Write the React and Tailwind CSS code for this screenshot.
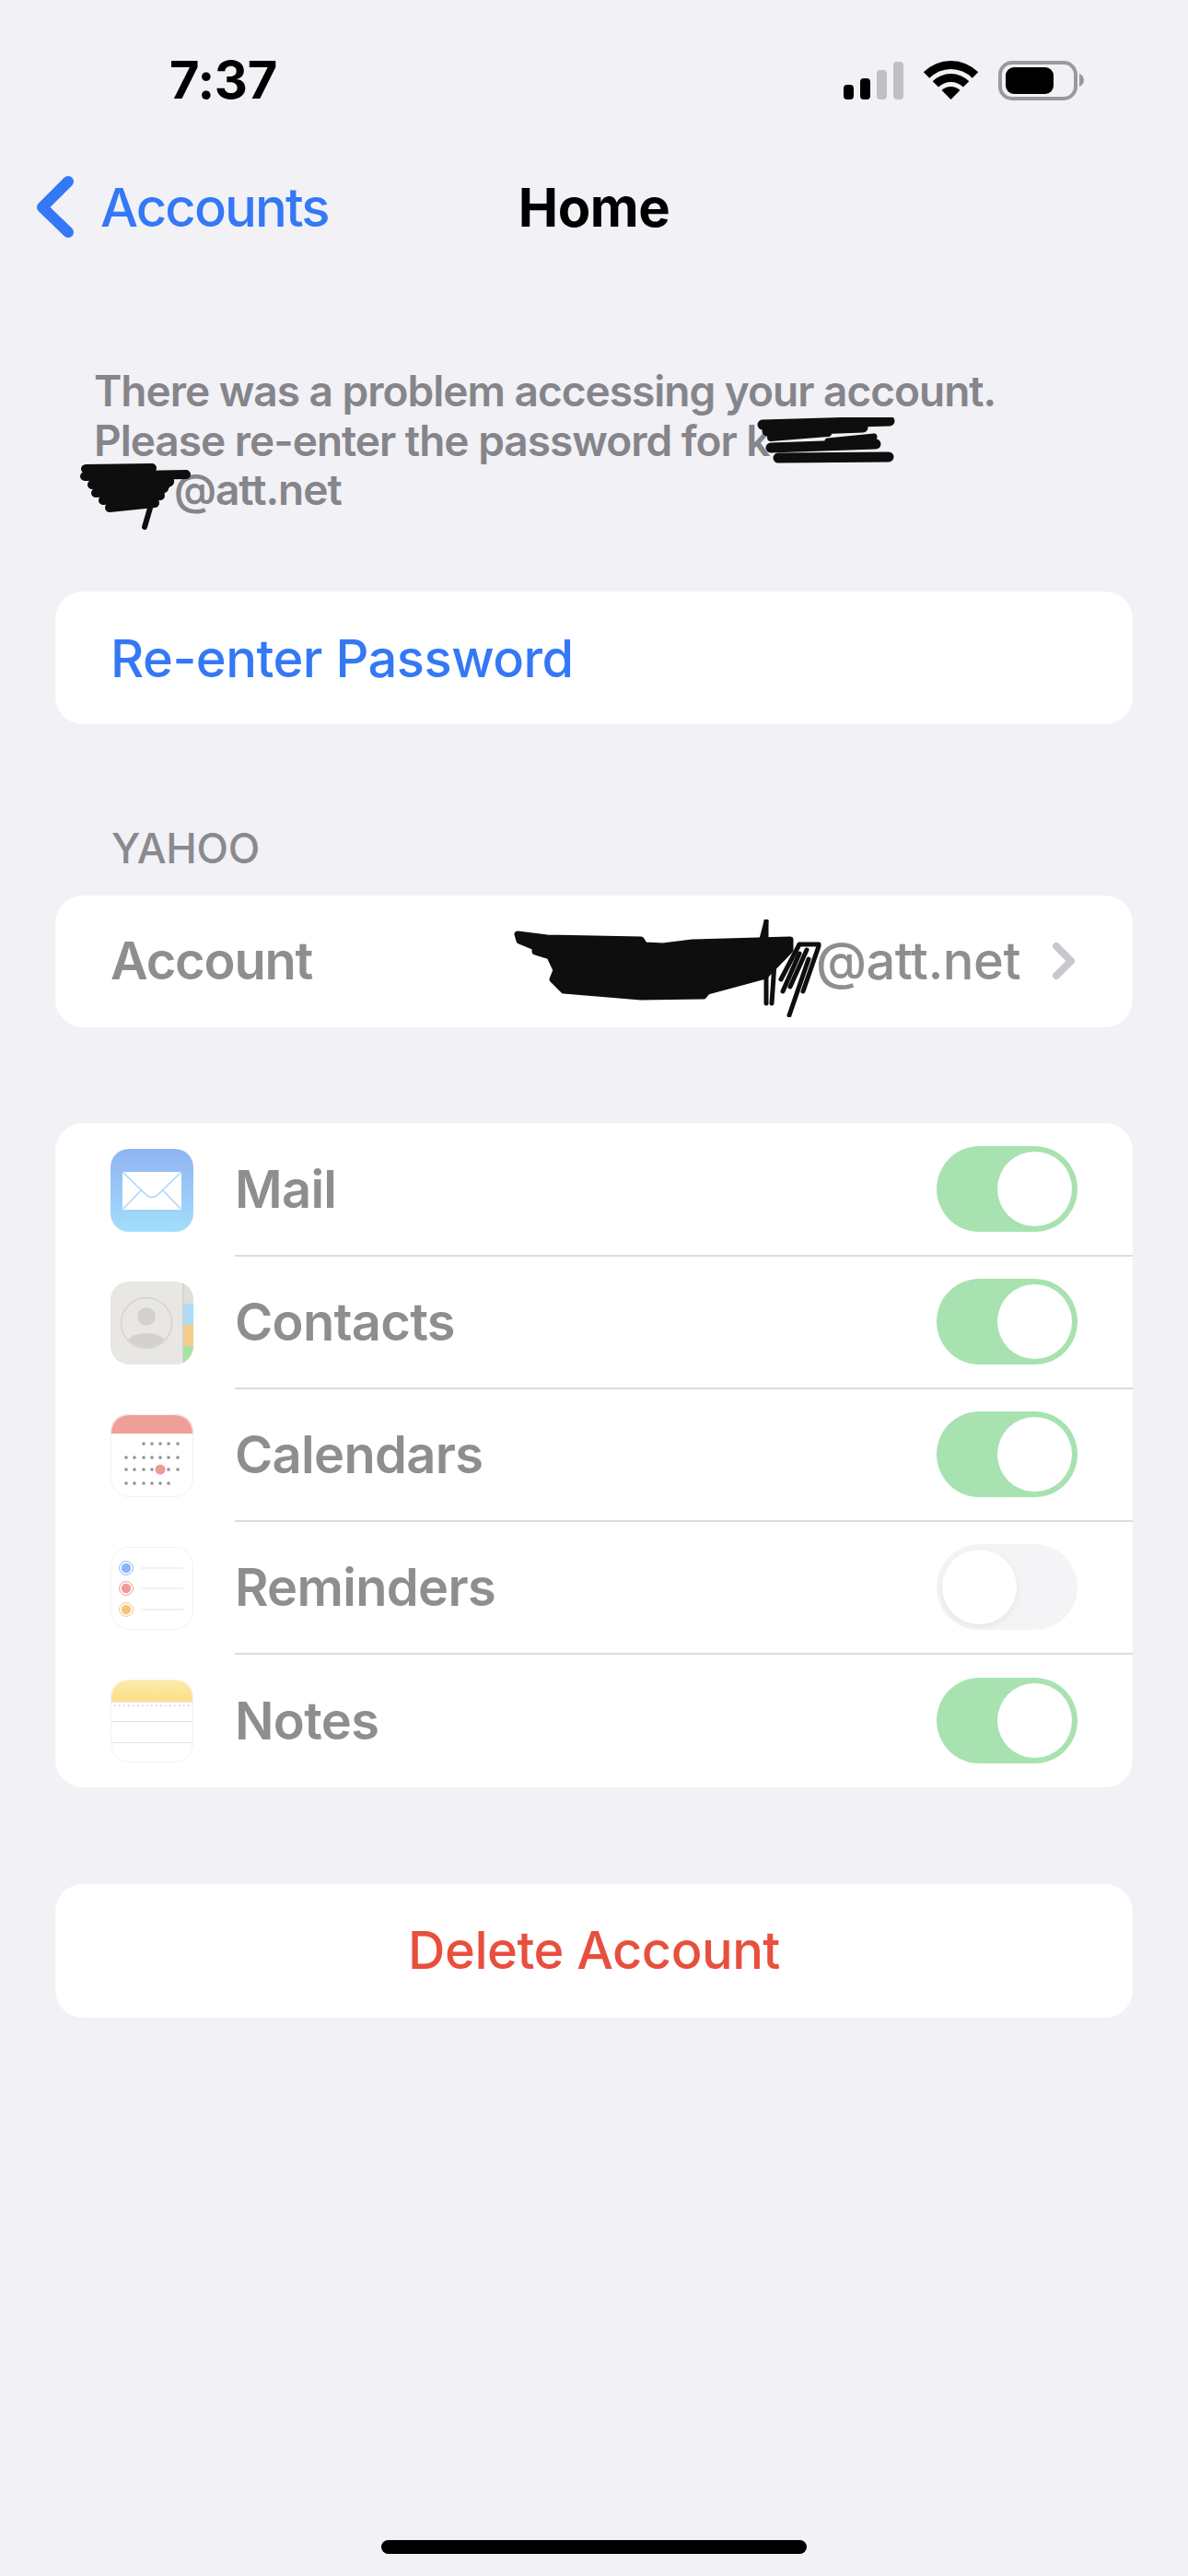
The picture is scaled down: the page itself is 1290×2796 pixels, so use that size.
const FONT = "font-['Inter','Noto_Sans',sans-serif]";

function StatusIcons() {
  return (
    <svg width="262" height="43" viewBox="916 65 262 43" fill="none">
      <rect x="916" y="91" width="11" height="16" rx="4" fill="#000" />
      <rect x="934" y="84" width="11" height="23" rx="4" fill="#000" />
      <rect x="952" y="75" width="11" height="32" rx="4" fill="#bfbfc4" />
      <rect x="970" y="66" width="11" height="41" rx="4" fill="#bfbfc4" />
      <path d="M1002.8 77.3A42 42 0 0 1 1062.2 77.3L1055.8 83.7A33 33 0 0 0 1009.2 83.7Z" fill="#000" />
      <path d="M1012.7 87.2A28 28 0 0 1 1052.3 87.2L1045.9 93.6A19 19 0 0 0 1019.1 93.6Z" fill="#000" />
      <path d="M1022.6 97.1A14 14 0 0 1 1042.4 97.1L1032.5 107Z" fill="#000" />
      <rect x="1086" y="67" width="82" height="39" rx="13" stroke="#9a9a9e" strokeWidth="4" />
      <rect x="1092" y="72" width="52" height="29" rx="9" fill="#000" />
      <path d="M1172 79C1175 80 1177 83 1177 86C1177 89 1175 92 1172 93Z" fill="#9a9a9e" />
    </svg>
  );
}

function BackChevron() {
  return (
    <svg width="42" height="68" viewBox="40 191 42 68" fill="none">
      <path d="M74 197L46 225L74 252" stroke="#3478f6" strokeWidth="12" strokeLinecap="round" strokeLinejoin="round" />
    </svg>
  );
}

function RedactionLine() {
  return (
    <svg className="absolute left-[720px] top-[55px]" width="150" height="51" viewBox="823 457 150 51" fill="none">
      <g stroke="#0e0e0e" strokeLinecap="round">
        <path d="M829 465L967 461" strokeWidth="11" />
        <path d="M834 472L938 468" strokeWidth="11" />
        <path d="M838 479L900 474" strokeWidth="8" />
        <path d="M838 490L952 486" strokeWidth="11" />
        <path d="M846 501L966 500" strokeWidth="11" />
        <path d="M900 483L950 478" strokeWidth="7" />
      </g>
    </svg>
  );
}

function RedactionName() {
  return (
    <svg className="absolute left-[-16px] top-[105px]" width="122" height="72" viewBox="86 507 122 72" fill="none">
      <g stroke="#0e0e0e" strokeWidth="10" strokeLinecap="round">
        <path d="M93 513L165 512" />
        <path d="M92 521L202 519" />
        <path d="M100 530L184 527" />
        <path d="M104 539L178 534" />
        <path d="M112 547L174 542" />
        <path d="M119 555L168 550" />
      </g>
      <path d="M186 526L164 552L157 576" stroke="#0e0e0e" strokeWidth="6" strokeLinecap="round" strokeLinejoin="round" />
    </svg>
  );
}

function RedactionAccount() {
  return (
    <svg className="absolute left-[498px] top-[26px]" width="336" height="106" viewBox="558 997 336 106" fill="none">
      <path
        d="M562 1013L594 1017L696 1019L700 1025L720 1026L752 1022L858 1019L858 1030L831 1058L768 1075L764 1080L696 1081L612 1074L600 1062L604 1052L597 1037L581 1032L581 1027L564 1020Z"
        fill="#0e0e0e"
        stroke="#0e0e0e"
        strokeWidth="7"
        strokeLinejoin="round"
      />
      <g stroke="#0e0e0e" strokeLinecap="round" strokeLinejoin="round" strokeWidth="5">
        <path d="M832 999L824 1030" />
        <path d="M832 999L832 1088" />
        <path d="M842 1030L838 1088" />
        <path d="M889 1024L868 1024L848 1062" />
        <path d="M889 1026L872 1075" />
        <path d="M878 1040L857 1101" />
        <path d="M868 1034L850 1075" />
        <path d="M876 1030L858 1070" />
      </g>
    </svg>
  );
}

function MailIcon() {
  return (
    <svg width="90" height="90" viewBox="0 0 90 90">
      <defs>
        <linearGradient id="mailBg" x1="0" y1="0" x2="0" y2="1">
          <stop offset="0" stopColor="#8fb4f1" />
          <stop offset="1" stopColor="#a2defb" />
        </linearGradient>
      </defs>
      <rect width="90" height="90" rx="20" fill="url(#mailBg)" />
      <rect x="13" y="25" width="64" height="41" rx="1.5" fill="#fff" />
      <path d="M14 26L39 50Q45 55 51 50L76 26M14 65L33 45M76 65L57 45" stroke="#a9d3f6" strokeWidth="1.4" fill="none" />
    </svg>
  );
}

function ContactsIcon() {
  return (
    <svg width="90" height="90" viewBox="0 0 90 90">
      <defs>
        <clipPath id="contactsClip"><rect width="90" height="90" rx="20" /></clipPath>
        <clipPath id="contactsRing"><circle cx="39" cy="45" r="26.5" /></clipPath>
      </defs>
      <g clipPath="url(#contactsClip)">
        <rect width="90" height="90" fill="#e8e7e3" />
        <rect x="79" width="11" height="24" fill="#dfdedb" />
        <rect x="79" y="24" width="11" height="23" fill="#aedbf7" />
        <rect x="79" y="47" width="11" height="23" fill="#f5cd8b" />
        <rect x="79" y="70" width="11" height="20" fill="#a8e2a6" />
        <rect x="78" width="1.5" height="90" fill="#d3d2cd" />
      </g>
      <circle cx="39" cy="45" r="27.5" fill="none" stroke="#d5d3ce" strokeWidth="1.4" />
      <circle cx="39" cy="38" r="9.8" fill="#d3d1cc" />
      <ellipse cx="39" cy="70" rx="23" ry="14" fill="#d3d1cc" clipPath="url(#contactsRing)" />
    </svg>
  );
}

function CalendarIcon() {
  const rows = [
    [32, [36, 45, 54, 63, 73]],
    [47, [17, 26, 36, 45, 54, 63, 73]],
    [60, [17, 26, 36, 45, 63, 73]],
    [75, [17, 26, 36, 45, 54, 63]],
  ];
  return (
    <svg width="90" height="90" viewBox="0 0 90 90">
      <defs>
        <clipPath id="calClip"><rect width="90" height="90" rx="20" /></clipPath>
      </defs>
      <g clipPath="url(#calClip)">
        <rect width="90" height="90" fill="#fff" />
        <rect width="90" height="21" fill="#ef9f98" />
      </g>
      <rect x="0.5" y="0.5" width="89" height="89" rx="20" fill="none" stroke="#f1f1f1" />
      {rows.map(([y, xs]) =>
        xs.map((x) => <rect key={`${x}-${y}`} x={x - 1.5} y={y - 1.5} width="3" height="3" fill="#8c8c8c" />)
      )}
      <circle cx="54" cy="60" r="5.5" fill="#ee9c94" />
    </svg>
  );
}

function RemindersIcon() {
  const items = [
    [23, "#8bb6f7"],
    [45, "#f09b98"],
    [68, "#f4c67c"],
  ];
  return (
    <svg width="90" height="90" viewBox="0 0 90 90">
      <rect x="0.5" y="0.5" width="89" height="89" rx="20" fill="#fff" stroke="#f2f2f2" />
      {items.map(([y, c]) => (
        <g key={y}>
          <circle cx="17" cy={y} r="7.4" fill="none" stroke={c} strokeWidth="1" />
          <circle cx="17" cy={y} r="5.2" fill={c} />
          <rect x="33" y={y - 0.5} width="46" height="1" fill="#e4e4e4" />
        </g>
      ))}
    </svg>
  );
}

function NotesIcon() {
  const dots = Array.from({ length: 18 }, (_, i) => 4 + i * 5);
  return (
    <svg width="90" height="90" viewBox="0 0 90 90">
      <defs>
        <clipPath id="notesClip"><rect width="90" height="90" rx="20" /></clipPath>
        <linearGradient id="notesBg" x1="0" y1="0" x2="0" y2="1">
          <stop offset="0" stopColor="#fdeaa8" />
          <stop offset="1" stopColor="#fbe08a" />
        </linearGradient>
      </defs>
      <g clipPath="url(#notesClip)">
        <rect width="90" height="90" fill="#fff" />
        <rect width="90" height="24" fill="url(#notesBg)" />
        <rect y="24" width="90" height="1" fill="#e8e6dc" />
        {dots.map((x) => <rect key={x} x={x} y="27.5" width="1.6" height="1.6" fill="#d2d0d6" />)}
        <rect y="45" width="90" height="1" fill="#e2e2e2" />
        <rect y="68" width="90" height="1" fill="#e2e2e2" />
      </g>
      <rect x="0.5" y="0.5" width="89" height="89" rx="20" fill="none" stroke="#f2f2f2" />
    </svg>
  );
}

function Toggle({ on }) {
  return on ? (
    <div className="flex h-[93px] w-[153px] items-center justify-end rounded-full bg-[#a8e2b0] p-[6px]">
      <div className="h-[81px] w-[81px] rounded-full bg-white" />
    </div>
  ) : (
    <div className="flex h-[93px] w-[153px] items-center justify-start rounded-full bg-[#f4f4f6] p-[6px]">
      <div className="h-[81px] w-[81px] rounded-full bg-white shadow-[0_3px_8px_rgba(0,0,0,0.06)]" />
    </div>
  );
}

function ServiceRow({ icon, label, on, last }) {
  return (
    <div className="flex h-[144px] items-center pl-[60px]">
      <div className="h-[90px] w-[90px] shrink-0">{icon}</div>
      <div
        className={`ml-[45px] flex h-full flex-1 items-center justify-between pr-[60px] ${
          last ? "" : "border-b-2 border-[#dcdcdf]"
        }`}
      >
        <span className="text-[56px] leading-none font-semibold tracking-[-0.7px] text-[#8e8e8e]">{label}</span>
        <Toggle on={on} />
      </div>
    </div>
  );
}

export default function App() {
  return (
    <div className={`${FONT} flex h-[2796px] w-[1290px] flex-col overflow-hidden bg-[#f1f1f6]`}>
      <div className="flex h-[174px] items-center justify-between pr-[112px] pl-[184px]">
        <span className="text-[56px] leading-none font-bold tracking-[-0.3px] text-black">7:37</span>
        <StatusIcons />
      </div>

      <div className="grid h-[102px] grid-cols-[1fr_auto_1fr] items-center">
        <div className="flex items-center gap-[27px] pl-[40px]">
          <BackChevron />
          <span className="text-[58px] leading-none font-medium tracking-[-1.9px] text-[#3478f6]">Accounts</span>
        </div>
        <span className="text-[58px] leading-none font-bold tracking-[-0.5px] text-black">Home</span>
        <div />
      </div>

      <div className="relative mt-[122px] ml-[102px] text-[46px] leading-[53.5px] font-semibold tracking-[-1px] text-[#85858a]">
        There was a problem accessing your account.
        <br />
        Please re-enter the password for k
        <br />
        <span className="inline-block w-[87px]" />@att.net
        <RedactionLine />
        <RedactionName />
      </div>

      <div className="mx-[60px] mt-[83px] flex h-[144px] items-center rounded-[30px] bg-white pl-[60px]">
        <span className="relative top-[1px] text-[56px] leading-none font-medium tracking-[-0.5px] text-[#3478f6]">Re-enter Password</span>
      </div>

      <div className="mt-[107px] ml-[121px] text-[45px] leading-[56px] font-medium tracking-[-0.3px] text-[#8a8a8e]">YAHOO</div>

      <div className="relative mx-[60px] mt-[23px] flex h-[143px] items-center justify-between rounded-[30px] bg-white pr-[62px] pl-[60px]">
        <span className="text-[56px] leading-none font-semibold tracking-[-1.2px] text-[#8e8e8e]">Account</span>
        <div className="flex items-center gap-[34px]">
          <span className="text-[56px] leading-none font-medium tracking-[-0.5px] text-[#8e8e8e]">@att.net</span>
          <svg width="26" height="42" viewBox="0 0 26 42" fill="none">
            <path d="M5 5L21 21L5 37" stroke="#c7c7cc" strokeWidth="8" strokeLinecap="round" strokeLinejoin="round" />
          </svg>
        </div>
        <RedactionAccount />
      </div>

      <div className="mx-[60px] mt-[104px] overflow-hidden rounded-[30px] bg-white pt-[1px]">
        <ServiceRow icon={<MailIcon />} label="Mail" on />
        <ServiceRow icon={<ContactsIcon />} label="Contacts" on />
        <ServiceRow icon={<CalendarIcon />} label="Calendars" on />
        <ServiceRow icon={<RemindersIcon />} label="Reminders" on={false} />
        <ServiceRow icon={<NotesIcon />} label="Notes" on last />
      </div>

      <div className="mx-[60px] mt-[105px] flex h-[145px] items-center justify-center rounded-[30px] bg-white">
        <span className="text-[56px] leading-none font-medium tracking-[-0.5px] text-[#e84f3d]">Delete Account</span>
      </div>

      <div className="mt-auto mb-[24px] flex justify-center">
        <div className="h-[15px] w-[462px] rounded-full bg-black" />
      </div>
    </div>
  );
}
